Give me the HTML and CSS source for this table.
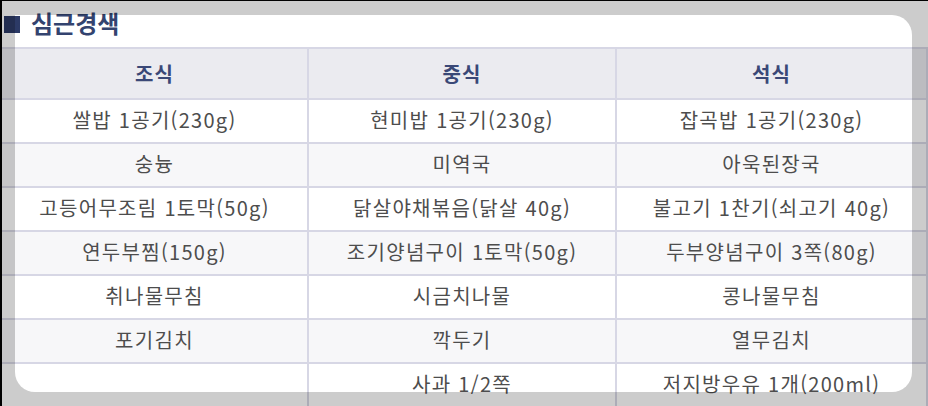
FILE: index.html
```html
<!DOCTYPE html>
<html lang="ko">
<head>
<meta charset="utf-8">
<title>심근경색</title>
<link rel="stylesheet" href="styles.css">
</head>
<body>
<div class="screen">
  <h2 class="title"><span class="mark"></span>심근경색</h2>
  <table class="menu">
    <colgroup><col class="c1"><col class="c2"><col class="c3"></colgroup>
    <thead>
      <tr><th>조식</th><th>중식</th><th>석식</th></tr>
    </thead>
    <tbody>
      <tr><td>쌀밥 1공기(230g)</td><td>현미밥 1공기(230g)</td><td>잡곡밥 1공기(230g)</td></tr>
      <tr><td>숭늉</td><td>미역국</td><td>아욱된장국</td></tr>
      <tr><td>고등어무조림 1토막(50g)</td><td>닭살야채볶음(닭살 40g)</td><td>불고기 1찬기(쇠고기 40g)</td></tr>
      <tr><td>연두부찜(150g)</td><td>조기양념구이 1토막(50g)</td><td>두부양념구이 3쪽(80g)</td></tr>
      <tr><td>취나물무침</td><td>시금치나물</td><td>콩나물무침</td></tr>
      <tr><td>포기김치</td><td>깍두기</td><td>열무김치</td></tr>
      <tr><td></td><td>사과 1/2쪽</td><td>저지방우유 1개(200ml)</td></tr>
    </tbody>
  </table>
  <div class="spotlight"></div>
</div>
</body>
</html>
```

FILE: styles.css
```css
html, body {
  margin: 0;
  padding: 0;
  background: #000;
}
.screen {
  position: relative;
  width: 926px;
  height: 405px;
  margin-left: 2px;
  margin-top: 1px;
  background: #fff;
  overflow: hidden;
  font-family: "Noto Sans CJK KR", "Noto Sans", sans-serif;
}
.title {
  display: flex;
  align-items: center;
  gap: 11px;
  height: 46px;
  margin: 0;
  padding: 0 0 3px 2px;
  box-sizing: border-box;
  font-size: 24px;
  font-weight: 700;
  color: #33436f;
  line-height: 1;
}
.mark {
  width: 16px;
  height: 17px;
  margin-top: 3px;
  background: #2c3a66;
}
.menu {
  width: 926px;
  border-collapse: collapse;
  table-layout: fixed;
  margin-left: -2px;
}
.c1 { width: 307px; }
.c2 { width: 308px; }
.c3 { width: 311px; }
.menu th, .menu td {
  border: 2px solid #d7d7e5;
  text-align: center;
  padding: 0;
}
.menu th {
  height: 49px;
  background: #ebebf0;
  color: #3a4877;
  font-size: 20px;
  font-weight: 700;
  letter-spacing: 1px;
}
.menu td {
  height: 40px;
  font-size: 20px;
  line-height: 24px;
  letter-spacing: 1.3px;
  color: #4d4d4d;
  background: #fff;
  padding: 0 0 2px;
}
.menu tbody tr:nth-child(even) td {
  background: #f7f7f9;
}
.spotlight {
  position: absolute;
  left: 13px;
  top: 14px;
  width: 897px;
  height: 377px;
  border-radius: 0 20px 20px 20px;
  box-shadow: 0 0 0 1200px rgba(0, 0, 0, 0.2);
  pointer-events: none;
}
```
